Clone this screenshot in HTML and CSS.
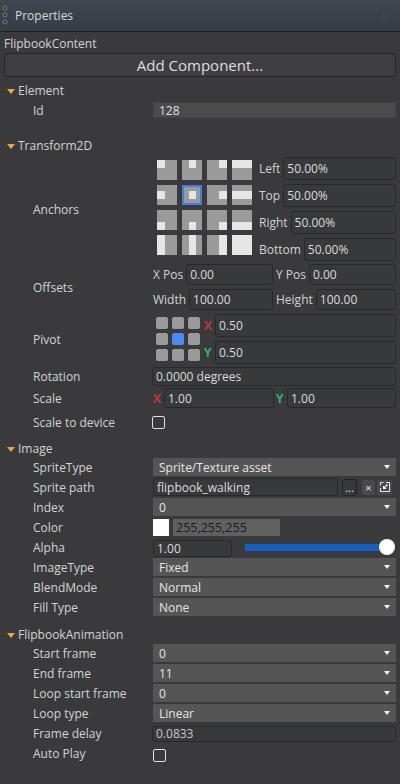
FILE: index.html
```html
<!DOCTYPE html>
<html>
<head>
<meta charset="utf-8">
<link rel="stylesheet" href="styles.css">
</head>
<body>
<div class="header">
  <svg class="grip" width="6" height="20" viewBox="0 0 6 20"><circle cx="3" cy="3" r="2" /><circle cx="3" cy="10" r="2" /><circle cx="3" cy="17" r="2" /></svg>
  <span class="title">Properties</span>
  <span class="close">×</span>
</div>
<div class="panel">
  <div class="entity">FlipbookContent</div>
  <div class="add">Add Component...</div>

  <div class="sec-head sec-element"><i class="tri"></i>Element</div>
  <div class="row r-id"><div class="label">Id</div><div class="val"><div class="ro">128</div></div></div>

  <div class="sec-head sec-transform"><i class="tri"></i>Transform2D</div>
  <div class="row r-anchors">
    <div class="label">Anchors</div>
    <div class="val anchors">
      <svg class="agrid" width="95" height="95" viewBox="0 0 95 95">
        <g fill="#9a9a9a">
          <rect x="0" y="0" width="20" height="20"/><rect x="25" y="0" width="20" height="20"/><rect x="50" y="0" width="20" height="20"/><rect x="75" y="0" width="20" height="20"/>
          <rect x="0" y="25" width="20" height="20"/><rect x="25" y="25" width="20" height="20"/><rect x="50" y="25" width="20" height="20"/><rect x="75" y="25" width="20" height="20"/>
          <rect x="0" y="50" width="20" height="20"/><rect x="25" y="50" width="20" height="20"/><rect x="50" y="50" width="20" height="20"/><rect x="75" y="50" width="20" height="20"/>
          <rect x="0" y="75" width="20" height="20"/><rect x="25" y="75" width="20" height="20"/><rect x="50" y="75" width="20" height="20"/><rect x="75" y="75" width="20" height="20"/>
        </g>
        <g fill="#e6e6e6">
          <rect x="0" y="0" width="8" height="8"/><rect x="32" y="0" width="7" height="8"/><rect x="62" y="0" width="8" height="8"/><rect x="75" y="0" width="20" height="8"/>
          <rect x="0" y="31" width="8" height="8"/><rect x="32" y="31" width="7" height="8"/><rect x="62" y="31" width="8" height="8"/><rect x="75" y="31" width="20" height="8"/>
          <rect x="0" y="62" width="8" height="8"/><rect x="32" y="62" width="7" height="8"/><rect x="62" y="62" width="8" height="8"/><rect x="75" y="62" width="20" height="8"/>
          <rect x="0" y="75" width="8" height="20"/><rect x="32" y="75" width="7" height="20"/><rect x="62" y="75" width="8" height="20"/><rect x="75" y="75" width="20" height="20"/>
        </g>
        <rect x="26" y="26" width="18" height="18" fill="none" stroke="#3d7ff0" stroke-width="2"/>
      </svg>
      <div class="acol">
        <div class="pair"><span class="plabel">Left</span><div class="inp">50.00%</div></div>
        <div class="pair"><span class="plabel">Top</span><div class="inp">50.00%</div></div>
        <div class="pair"><span class="plabel">Right</span><div class="inp">50.00%</div></div>
        <div class="pair"><span class="plabel">Bottom</span><div class="inp">50.00%</div></div>
      </div>
    </div>
  </div>

  <div class="row r-offsets">
    <div class="label">Offsets</div>
    <div class="val offsets">
      <div class="pair"><span class="plabel">X Pos</span><div class="inp">0.00</div></div>
      <div class="pair"><span class="plabel">Y Pos</span><div class="inp">0.00</div></div>
      <div class="pair"><span class="plabel">Width</span><div class="inp">100.00</div></div>
      <div class="pair"><span class="plabel">Height</span><div class="inp">100.00</div></div>
    </div>
  </div>

  <div class="row r-pivot">
    <div class="label">Pivot</div>
    <div class="val pivot">
      <div class="pgrid">
        <i></i><i></i><i></i>
        <i></i><i class="on"></i><i></i>
        <i></i><i></i><i></i>
      </div>
      <div class="pcol">
        <div class="pair"><span class="ax x">X</span><div class="inp">0.50</div></div>
        <div class="pair"><span class="ax y">Y</span><div class="inp">0.50</div></div>
      </div>
    </div>
  </div>

  <div class="row r-rot"><div class="label">Rotation</div><div class="val"><div class="inp">0.0000 degrees</div></div></div>
  <div class="row r-scale">
    <div class="label">Scale</div>
    <div class="val scale">
      <div class="pair"><span class="ax x">X</span><div class="inp">1.00</div></div>
      <div class="pair"><span class="ax y">Y</span><div class="inp">1.00</div></div>
    </div>
  </div>
  <div class="row r-check"><div class="label">Scale to device</div><div class="val"><span class="check"></span></div></div>

  <div class="sec-head sec-image"><i class="tri"></i>Image</div>
  <div class="row r-20"><div class="label">SpriteType</div><div class="val"><div class="dd">Sprite/Texture asset</div></div></div>
  <div class="row r-20">
    <div class="label">Sprite path</div>
    <div class="val path">
      <div class="inp path-inp">flipbook_walking</div>
      <div class="btn dots">...</div>
      <div class="btn clr">×</div>
      <div class="btn open"><svg width="12" height="12" viewBox="0 0 12 12"><path d="M7 1.5 H10.5 V10.5 H1.5 V7" fill="none" stroke="#e8e8e8" stroke-width="1"/><path d="M1.5 1.5 H4.5 M1.5 1.5 V4.5" fill="none" stroke="#e8e8e8" stroke-width="1"/><path d="M8.5 3.5 L4.5 7.5 M4.5 5 V7.5 H7" fill="none" stroke="#ffffff" stroke-width="1.1"/></svg></div>
    </div>
  </div>
  <div class="row r-20"><div class="label">Index</div><div class="val"><div class="dd">0</div></div></div>
  <div class="row r-20">
    <div class="label">Color</div>
    <div class="val color"><span class="swatch"></span><div class="ctext">255,255,255</div></div>
  </div>
  <div class="row r-20">
    <div class="label">Alpha</div>
    <div class="val alpha"><div class="inp alpha-inp">1.00</div><div class="slider"><span class="bar"></span><span class="knob"></span></div></div>
  </div>
  <div class="row r-20"><div class="label">ImageType</div><div class="val"><div class="dd">Fixed</div></div></div>
  <div class="row r-20"><div class="label">BlendMode</div><div class="val"><div class="dd">Normal</div></div></div>
  <div class="row r-20"><div class="label">Fill Type</div><div class="val"><div class="dd">None</div></div></div>

  <div class="sec-head sec-flip"><i class="tri"></i>FlipbookAnimation</div>
  <div class="row r-20"><div class="label">Start frame</div><div class="val"><div class="dd">0</div></div></div>
  <div class="row r-20"><div class="label">End frame</div><div class="val"><div class="dd">11</div></div></div>
  <div class="row r-20"><div class="label">Loop start frame</div><div class="val"><div class="dd">0</div></div></div>
  <div class="row r-20"><div class="label">Loop type</div><div class="val"><div class="dd">Linear</div></div></div>
  <div class="row r-20"><div class="label">Frame delay</div><div class="val"><div class="inp delay">0.0833</div></div></div>
  <div class="row r-20 r-auto"><div class="label">Auto Play</div><div class="val"><span class="check"></span></div></div>
</div>
</body>
</html>
```
FILE: styles.css
```css
* { box-sizing: border-box; }
html, body { margin: 0; padding: 0; }
body {
  width: 400px;
  height: 784px;
  background: #3a3a3c;
  font-family: "Open Sans", "DejaVu Sans", sans-serif;
  font-size: 12px;
  color: #d2d4d6;
  overflow: hidden;
}
.header {
  height: 32px;
  background: linear-gradient(#3f4751, #363c44);
  border-bottom: 1px solid #1f2226;
  display: flex;
  align-items: center;
  padding-left: 2px;
  padding-bottom: 1px;
}
.grip { margin-right: 7px; }
.grip circle { fill: #2e3237; stroke: #787e85; stroke-width: 1; }
.title { color: #d6dade; flex: 1; }
.close { color: #474d55; font-size: 13px; margin-right: 12px; }

.panel { padding: 0 4px; }
.entity { margin-top: 4px; line-height: 16px; }
.add {
  margin-top: 1px;
  height: 24px;
  border: 1px solid #26272a;
  border-radius: 4px;
  background: #3f3f41;
  font-size: 15px;
  line-height: 22px;
  text-align: center;
  color: #dcdee0;
}

.sec-head {
  height: 16px;
  line-height: 16px;
  display: flex;
  align-items: center;
}
.tri {
  width: 0; height: 0;
  border-left: 4px solid transparent;
  border-right: 4px solid transparent;
  border-top: 5px solid #f2a33a;
  margin-left: 3px;
  margin-right: 3px;
  margin-top: 1px;
}
.sec-element { margin-top: 6px; }
.sec-transform { margin-top: 20px; }
.sec-image { margin-top: 9px; }
.sec-flip { margin-top: 9px; }

.row { display: flex; align-items: center; }
.label { width: 148px; padding-left: 29px; flex: none; white-space: nowrap; }
.val { flex: 1; display: flex; align-items: center; min-width: 0; }

.inp {
  flex: 1;
  height: 100%;
  border: 1px solid #27282b;
  border-radius: 3px;
  background: #38393b;
  padding-left: 3px;
  display: flex;
  align-items: center;
  color: #dcdcdc;
  min-width: 0;
}
.ro {
  flex: 1;
  height: 16px;
  background: #4b4b4c;
  border: 1px solid #424345;
  padding-left: 5px;
  display: flex;
  align-items: center;
  color: #e0e0e0;
  margin-left: 1px;
}
.r-id { margin-top: 3px; height: 16px; }

.r-anchors { margin-top: 3px; height: 104px; }
.anchors { padding-left: 5px; height: 100%; }
.agrid { flex: none; margin-top: -3px; }
.acol { flex: 1; margin-left: 7px; display: flex; flex-direction: column; gap: 4px; }
.acol .pair { height: 23px; }
.pair { display: flex; align-items: center; gap: 3px; }
.plabel { white-space: nowrap; }

.r-offsets { margin-top: 3px; height: 46px; }
.offsets {
  display: grid;
  grid-template-columns: 120px 1fr;
  column-gap: 3px;
  row-gap: 4px;
  height: 100%;
  padding-left: 1px;
}
.offsets .pair { height: 21px; }

.r-pivot { margin-top: 4px; height: 50px; }
.pivot { height: 100%; padding-left: 4px; }
.pgrid {
  display: grid;
  grid-template-columns: repeat(3, 12px);
  grid-auto-rows: 12px;
  gap: 4px;
  flex: none;
}
.pgrid i { background: #9a9a9a; border-radius: 2px; }
.pgrid i.on { background: #4a8af4; }
.pcol { flex: 1; margin-left: 4px; display: flex; flex-direction: column; gap: 4px; }
.pcol .pair { height: 23px; gap: 1px; }
.ax { font-weight: bold; font-size: 12px; width: 10px; flex: none; }
.ax.x { color: #c0363a; }
.ax.y { color: #2cb867; }

.r-rot { margin-top: 4px; height: 16px; }
.r-scale { margin-top: 4px; height: 20px; }
.scale { height: 100%; gap: 2px; padding-left: 1px; }
.scale .pair { flex: 1; height: 100%; gap: 1px; }
.scale .pair:first-child { flex: none; width: 121px; }

.r-check { margin-top: 4px; height: 20px; }
.check {
  width: 13px; height: 13px;
  border: 1px solid #e2e2e2;
  border-radius: 2px;
  display: block;
}

.r-20 { height: 20px; align-items: flex-start; }
.r-20 .label { line-height: 18px; padding-top: 1px; }
.sec-image + .r-20, .sec-flip + .r-20 { margin-top: 1px; }
.r-20 .val { height: 18px; padding-left: 1px; }
.dd {
  flex: 1;
  height: 18px;
  background: #555555;
  color: #e6e6e6;
  padding-left: 6px;
  display: flex;
  align-items: center;
  position: relative;
}
.dd::after {
  content: "";
  position: absolute;
  right: 6px;
  top: 7px;
  border-left: 3.5px solid transparent;
  border-right: 3.5px solid transparent;
  border-top: 4px solid #f0f0f0;
}
.path { gap: 4px; }
.path-inp { flex: 1; }
.btn {
  flex: none;
  width: 15px;
  height: 17px;
  border: 1px solid #222326;
  border-radius: 3px;
  background: #38393b;
  color: #e6e6e6;
  display: flex;
  align-items: center;
  justify-content: center;
  font-size: 11px;
}
.btn.dots { align-items: flex-end; line-height: 14px; }
.btn.clr { background: #4a4a4c; border-color: #3a3a3c; margin-left: 0; }
.btn.open { background: #4a4a4c; border-color: #3a3a3c; width: 17px; margin-left: -4px; margin-right: 3px; }

.color { gap: 4px; }
.swatch { width: 16px; height: 17px; background: #ffffff; flex: none; }
.ctext {
  width: 107px;
  height: 17px;
  background: #606060;
  color: #1c1c1c;
  padding-left: 3px;
  line-height: 17px;
  font-size: 12.5px;
}
.r-20 .val.alpha { height: 18px; }
.alpha-inp { flex: none; width: 79px; height: 17px; margin-top: 2px; }
.slider { flex: 1; position: relative; height: 18px; margin-left: 13px; margin-right: 1px; margin-top: 2px; }
.bar { position: absolute; left: 0; right: 8px; top: 5px; height: 7px; background: #1662c4; }
.knob { position: absolute; right: 0; top: 0; width: 16px; height: 16px; border-radius: 50%; background: #ffffff; }

.delay { flex: none; width: 244px; height: 16px; margin-top: 1px; margin-left: -1px; color: #c8c8c8; }
.r-auto .val { align-items: center; height: 20px; }
.r-auto .check { margin-top: 3px; }
```
